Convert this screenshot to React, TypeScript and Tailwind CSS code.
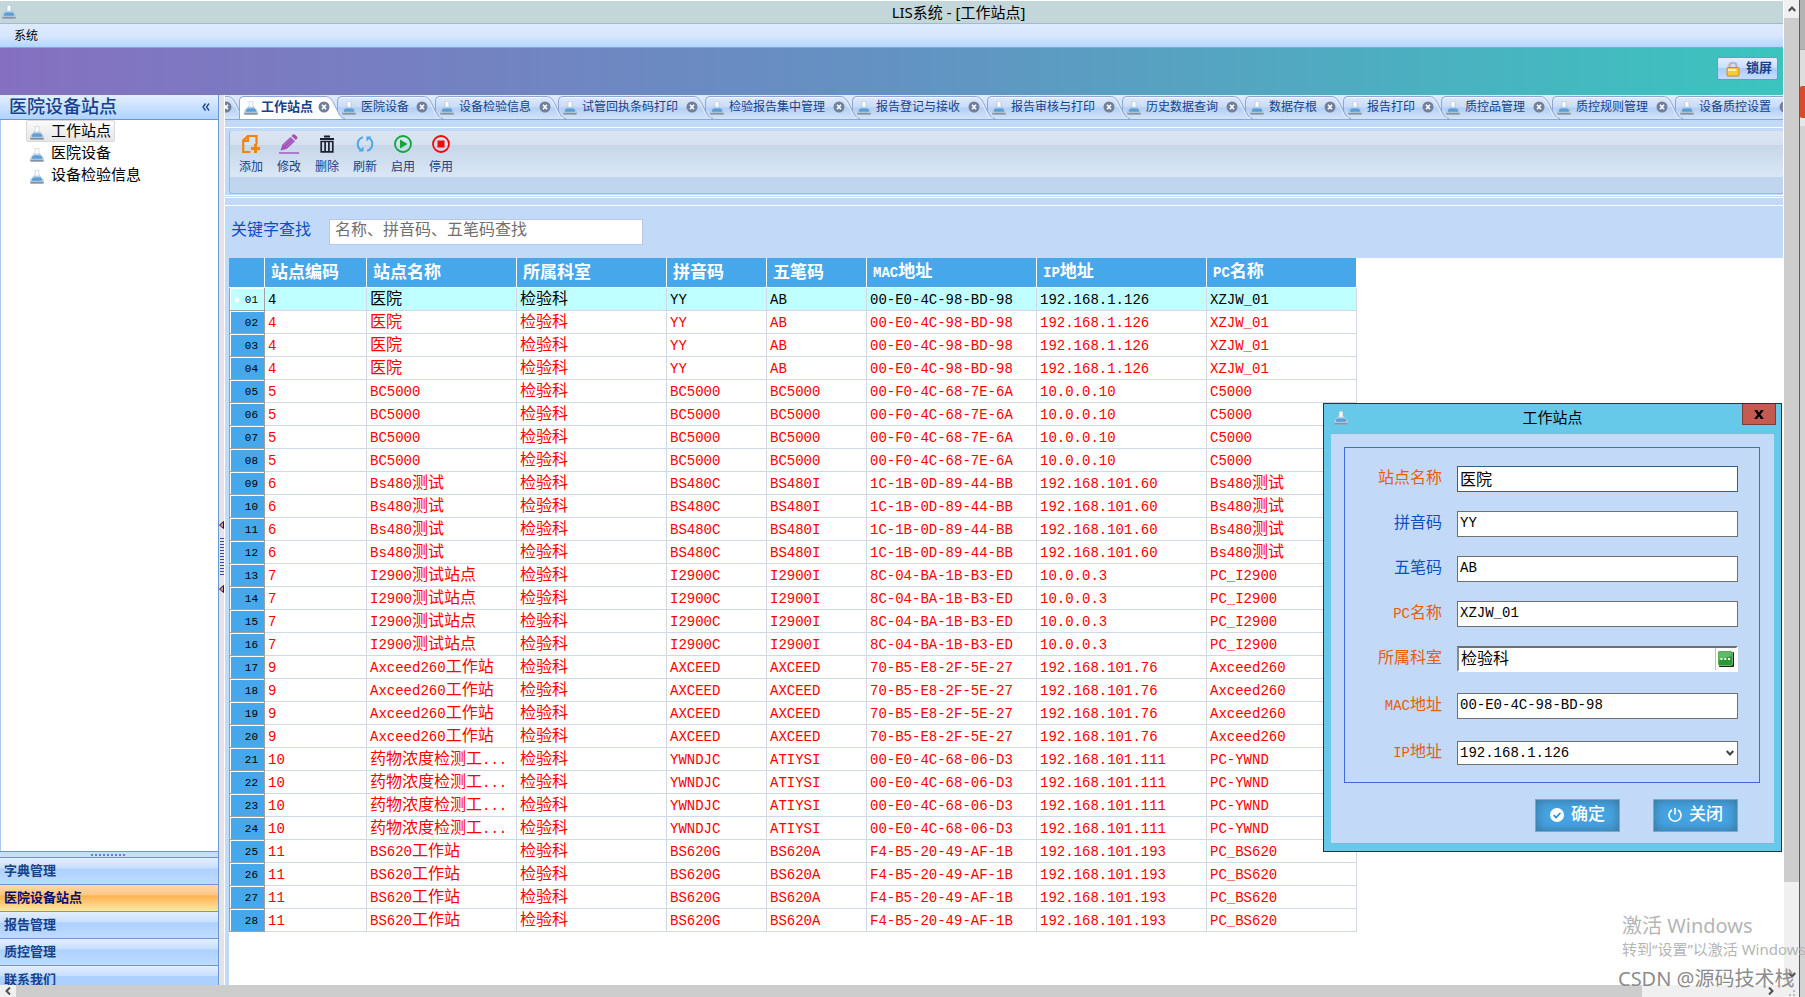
import React from "react";

const CJK = "font-['Liberation_Sans','Noto_Sans_CJK_SC',sans-serif]";

const tabs = [
  { name: "工作站点", width: "w-[98px]" },
  { name: "医院设备", width: "w-[98px]" },
  { name: "设备检验信息", width: "w-[123px]" },
  { name: "试管回执条码打印", width: "w-[147px]" },
  { name: "检验报告集中管理", width: "w-[147px]" },
  { name: "报告登记与接收", width: "w-[135px]" },
  { name: "报告审核与打印", width: "w-[135px]" },
  { name: "历史数据查询", width: "w-[123px]" },
  { name: "数据存根", width: "w-[98px]" },
  { name: "报告打印", width: "w-[98px]" },
  { name: "质控品管理", width: "w-[111px]" },
  { name: "质控规则管理", width: "w-[123px]" },
  { name: "设备质控设置", width: "w-[123px]" },
];

const columns = [
  { name: "站点编码", width: "w-[102px]" },
  { name: "站点名称", width: "w-[150px]" },
  { name: "所属科室", width: "w-[150px]" },
  { name: "拼音码", width: "w-[100px]" },
  { name: "五笔码", width: "w-[100px]" },
  { name: "MAC地址", width: "w-[170px]" },
  { name: "IP地址", width: "w-[170px]" },
  { name: "PC名称", width: "w-[150px]" },
];

const stations = [
  ["4", "医院", "检验科", "YY", "AB", "00-E0-4C-98-BD-98", "192.168.1.126", "XZJW_01"],
  ["5", "BC5000", "检验科", "BC5000", "BC5000", "00-F0-4C-68-7E-6A", "10.0.0.10", "C5000"],
  ["6", "Bs480测试", "检验科", "BS480C", "BS480I", "1C-1B-0D-89-44-BB", "192.168.101.60", "Bs480测试"],
  ["7", "I2900测试站点", "检验科", "I2900C", "I2900I", "8C-04-BA-1B-B3-ED", "10.0.0.3", "PC_I2900"],
  ["9", "Axceed260工作站", "检验科", "AXCEED", "AXCEED", "70-B5-E8-2F-5E-27", "192.168.101.76", "Axceed260"],
  ["10", "药物浓度检测工...", "检验科", "YWNDJC", "ATIYSI", "00-E0-4C-68-06-D3", "192.168.101.111", "PC-YWND"],
  ["11", "BS620工作站", "检验科", "BS620G", "BS620A", "F4-B5-20-49-AF-1B", "192.168.101.193", "PC_BS620"],
];
const rows = stations.flatMap((s) => [s, s, s, s]);

function Mixed({ text }: { text: string }) {
  return (
    <>
      {text.split(/([\x20-\x7e]+)/).map((part, i) =>
        i % 2 ? (
          <span key={i} className="font-['Liberation_Mono',monospace] text-[14px]">
            {part}
          </span>
        ) : (
          part
        )
      )}
    </>
  );
}

function Flask({ className = "" }: { className?: string }) {
  return (
    <svg viewBox="0 0 14 14" className={"h-[14px] w-[14px] shrink-0 " + className}>
      <defs>
        <linearGradient id="liquid" x1="0" y1="0" x2="0" y2="1">
          <stop offset="0" stopColor="#a9d3f2" />
          <stop offset="0.5" stopColor="#4f97d3" />
          <stop offset="1" stopColor="#7cb0dc" />
        </linearGradient>
      </defs>
      <path d="M5.200.400h3.600v4.200l4.200 4.900c.7.900.8 2.700.7 3.900H.3c-.1-1.200 0-3 .7-3.900l4.200-4.900z" fill="#d5dfe8" stroke="#a3b2c0" strokeWidth=".5" />
      <path d="M4.300 6.300h5.400l2.500 3c.5.800 0 1.700-1 1.900H2.800c-1-.2-1.500-1.100-1-1.900z" fill="url(#liquid)" />
      <path d="M.5 11.400c1 .6 12 .6 13 0v2.100H.5z" fill="#7f93a6" />
      <path d="M5.500.700h3v4.800h-3z" fill="#fff" />
    </svg>
  );
}

function CloseDot() {
  return (
    <svg viewBox="0 0 12 12" className="h-3 w-3">
      <circle cx="6" cy="6" r="5.500" fill="#6f7f9c" />
      <path d="M4 3.800l4 4.400M8 3.800l-4 4.400" stroke="#fff" strokeWidth="1.700" />
    </svg>
  );
}

function TabCap({ active }: { active: boolean }) {
  return (
    <svg viewBox="0 0 24 24" className="absolute -right-2 top-0 h-6 w-6">
      <defs>
        <linearGradient id="cap" x1="0" y1="0" x2="0" y2="1">
          <stop offset="0" stopColor="#dde8fb" />
          <stop offset=".45" stopColor="#c8dbf7" />
          <stop offset=".5" stopColor="#b4cff5" />
          <stop offset="1" stopColor="#d3e3f9" />
        </linearGradient>
      </defs>
      <path d="M0 .5H4C9 .5 11 4 13 8L18 18C20 21 21 22.500 24 22.500V23H0z" fill={active ? "#fff" : "url(#cap)"} />
      <path d="M0 .5H4C9 .5 11 4 13 8L18 18C20 21 21 22.500 24 22.500" fill="none" stroke="#8ea6d3" />
      {!active && <path d="M0 1.500H4C8 1.500 10 5 12 9L17 19C19 21.500 20 22 22 22.500" fill="none" stroke="#f3f8ff" strokeWidth=".8" />}
    </svg>
  );
}

function Tab({ name, width, active, order }: { name: string; width: string; active: boolean; order: number }) {
  return (
    <div className={"relative flex h-6 shrink-0 " + width} style={{ zIndex: order }}>
      <div
        className={
          "mr-4 min-w-0 flex-1 rounded-tl-[5px] border-l border-t border-[#8ea6d3] " +
          (active
            ? "bg-white"
            : "mb-px bg-[linear-gradient(#f3f8ff_0,#f3f8ff_1px,#dde8fb_1px,#c8dbf7_45%,#b4cff5_50%,#d3e3f9_100%)]")
        }
      />
      <TabCap active={active} />
      <div className="absolute inset-0 flex items-center pb-[3px] pl-[5px]">
        <Flask className="mt-[2px]" />
        <button
          className={
            "flex-1 whitespace-nowrap text-left text-[#15428b] " +
            (active ? "pl-[3px] text-[13px] font-bold" : "pl-[5px] text-[12px]")
          }
        >
          {name}
        </button>
        <button aria-label={"关闭" + name} className="mr-[7px] mt-px">
          <CloseDot />
        </button>
      </div>
    </div>
  );
}

const tools = [
  {
    name: "添加",
    icon: (
      <svg viewBox="0 0 20 20" className="h-5 w-5">
        <path d="M9.500 18H2.200V6.500L6.700 2H15.500V10M6.900 2.500V6.900H2.500" fill="none" stroke="#f08312" strokeWidth="2.200" />
        <path d="M14.500 10v9M10 14.500h9" stroke="#f08312" strokeWidth="3" />
      </svg>
    ),
  },
  {
    name: "修改",
    icon: (
      <svg viewBox="0 0 20 20" className="h-5 w-5">
        <path d="M1.500 16.500l2-6L11.500 3l4.500 4.200-8.300 7.700z" fill="#a351bd" />
        <path d="M12.500 2l1.200-1.200c.8-.8 1.700-.6 2.500.1l1.700 1.600c.8.8.7 1.700.1 2.300l-1.200 1.300z" fill="#a351bd" />
        <path d="M5 11l8-7.200M7 13l8-7.200" stroke="#c48ad6" strokeWidth=".7" />
        <path d="M0 19h20" stroke="#a351bd" strokeWidth="1.400" />
      </svg>
    ),
  },
  {
    name: "删除",
    icon: (
      <svg viewBox="0 0 20 20" className="h-5 w-5">
        <path d="M3 5h14M7 2.500h6" stroke="#1c2030" strokeWidth="2" />
        <path d="M4.200 7.500h11.600v10.300H4.200zM8.100 7.500v10M11.900 7.500v10" fill="none" stroke="#1c2030" strokeWidth="1.700" />
      </svg>
    ),
  },
  {
    name: "刷新",
    icon: (
      <svg viewBox="0 0 20 20" className="h-5 w-5">
        <path d="M8 3.100A7.200 7.200 0 0 0 5.500 15.700M12 16.900A7.200 7.200 0 0 0 14.500 4.300" fill="none" stroke="#4da6e8" strokeWidth="2" />
        <path d="M3.500 17.500h5v-5zM16.500 2.500h-5v5z" fill="#4da6e8" />
      </svg>
    ),
  },
  {
    name: "启用",
    icon: (
      <svg viewBox="0 0 20 20" className="h-5 w-5">
        <circle cx="10" cy="10" r="8" fill="none" stroke="#09a83a" strokeWidth="1.800" />
        <path d="M7 5.500l7.500 4.500L7 14.500z" fill="#09a83a" />
      </svg>
    ),
  },
  {
    name: "停用",
    icon: (
      <svg viewBox="0 0 20 20" className="h-5 w-5">
        <circle cx="10" cy="10" r="8" fill="none" stroke="#fa0505" strokeWidth="1.800" />
        <rect x="6.500" y="6.500" width="7" height="7" fill="#fa0505" />
      </svg>
    ),
  },
];

function Sidebar() {
  const nav = ["字典管理", "医院设备站点", "报告管理", "质控管理"];
  return (
    <aside className="flex w-[219px] shrink-0 flex-col border-r border-[#6c97d4] bg-white">
      <div className="flex h-[25px] shrink-0 items-center justify-between border-b border-[#6c97d4] bg-linear-to-b from-[#e3efff] to-[#afd2ff] pl-[9px] pr-2 text-[#15428b]">
        <h2 className="text-[18px] leading-6 font-medium">医院设备站点</h2>
        <button aria-label="折叠">
          <svg viewBox="0 0 8 8" className="h-2 w-2" fill="none" stroke="#15428b" strokeWidth="1.300">
            <path d="M3.500.5L1 4l2.500 3.500M7 .5L4.500 4 7 7.500" />
          </svg>
        </button>
      </div>
      <ul className="flex-1 border-l border-[#a9c6ec] text-[15px] leading-5 text-black">
        {["工作站点", "医院设备", "设备检验信息"].map((t, i) => (
          <li key={t} className="flex pl-[25px]">
            <button
              className={
                "flex h-[22px] items-center gap-[7px] whitespace-nowrap rounded-[2px] border px-[3px] pb-px " +
                (i === 0 ? "border-[#d9d9d9] bg-linear-to-b from-[#fafafa] to-[#e6e6e6]" : "border-transparent")
              }
            >
              <Flask className="mt-1" />
              <span>{t}</span>
            </button>
          </li>
        ))}
      </ul>
      <div className="flex h-[7px] shrink-0 items-center justify-center border-y border-[#6c97d4] bg-[#c6ddfb]">
        <div className="h-[2px] w-9 bg-[repeating-linear-gradient(90deg,#5b87c7_0,#5b87c7_2px,transparent_2px,transparent_4px)]" />
      </div>
      {nav.map((t, i) => (
        <button
          key={t}
          className={
            "h-[27px] shrink-0 border-b border-[#6c97d4] pl-1 text-left text-[13px] font-bold " +
            (i === 1
              ? "bg-[linear-gradient(#ffd9aa_0,#ffc785_38%,#ffb154_42%,#fdea9e_100%)] text-[#06106c]"
              : "bg-[linear-gradient(#e1eeff_0,#c9dffd_38%,#add1ff_42%,#c0dbff_100%)] text-[#15428b]")
          }
        >
          {t}
        </button>
      ))}
      <button className="h-[19px] shrink-0 overflow-hidden bg-[linear-gradient(#e1eeff_0,#c9dffd_50%,#add1ff_55%)] pl-1 text-left text-[13px] leading-[27px] font-bold text-[#15428b]">
        联系我们
      </button>
    </aside>
  );
}

function Splitter() {
  const arrow = (
    <svg viewBox="0 0 5 8" className="h-2 w-[5px]">
      <path d="M4.500.5v7L.5 4z" fill="#e08b6d" stroke="#0b1a78" />
    </svg>
  );
  return (
    <div className="flex w-[5px] shrink-0 flex-col items-center bg-[#e3e3e3] pt-[426px]">
      {arrow}
      <div className="my-2 h-10 w-1 bg-[radial-gradient(#3a4aa0_40%,transparent_45%)] bg-[length:2px_3px]" />
      {arrow}
    </div>
  );
}

function StationTable() {
  return (
    <table className="w-[1128px] table-fixed border-separate border-spacing-0 text-[16px]">
      <thead>
        <tr className="h-[30px]">
          <th className="w-9 border-b border-r border-white bg-[#46a8ea]" aria-label="序号" />
          {columns.map((c) => (
            <th
              key={c.name}
              className={"border-b border-r border-white bg-[#46a8ea] p-0 pl-[6px] text-left text-[17px] leading-6 font-bold text-white " + c.width}
            >
              <Mixed text={c.name} />
            </th>
          ))}
        </tr>
      </thead>
      <tbody>
        {rows.map((r, i) => (
          <tr key={i} className={"h-[23px] " + (i === 0 ? "bg-[#c0ffff] text-black" : "bg-white text-[#ff0000]")}>
            <th
              className={
                "border-b border-l border-r border-[#a0a0a0] p-0 text-right font-['Liberation_Mono',monospace] text-[11px] leading-5 font-normal text-black " +
                (i === 0 ? "bg-[#c0ffff]" : "bg-[#46a8ea]")
              }
            >
              <div className="flex h-[22px] items-center justify-end border-l border-t border-white pr-[6px]">
                {i === 0 && (
                  <svg viewBox="0 0 5 8" className="mr-[5px] h-2 w-[5px]">
                    <path d="M0 0l5 4-5 4z" fill="#fff" />
                  </svg>
                )}
                {String(i + 1).padStart(2, "0")}
              </div>
            </th>
            {r.map((v, j) => (
              <td key={j} className="overflow-hidden whitespace-nowrap border-b border-r border-[#d0d7e5] p-0 pl-[3px] leading-[18px]">
                <Mixed text={v} />
              </td>
            ))}
          </tr>
        ))}
      </tbody>
    </table>
  );
}

function Field({ id, label, required, children }: { id: string; label: string; required?: boolean; children: React.ReactNode }) {
  return (
    <div className="flex h-[26px] items-center">
      <label
        htmlFor={id}
        className={"w-[97px] shrink-0 whitespace-nowrap pb-[2px] text-right text-[16px] leading-6 " + (required ? "text-[#e95d06]" : "text-[#0a50c4]")}
      >
        <Mixed text={label} />
      </label>
      <div className="ml-[15px] mr-[21px] flex min-w-0 flex-1">{children}</div>
    </div>
  );
}

const box = "h-[26px] w-full border bg-white pl-[2px] pb-[3px] text-black outline-none ";
const mono = "border-[#707070] font-['Liberation_Mono',monospace] text-[14px]";
const actionButton =
  "flex h-[33px] w-[85px] items-center justify-center gap-[7px] border border-[#6cafc6] bg-[#46a4e3] pb-px text-[17px] font-medium text-white shadow-[inset_0_0_12px_#396f95]";

function StationDialog() {
  return (
    <section
      role="dialog"
      aria-label="工作站点"
      className="absolute right-[23px] top-[403px] z-50 w-[459px] border border-[#26343c] bg-[#66c9e9] px-[7px] pb-[7px]"
    >
      <header className="relative flex h-[29px] items-center justify-center">
        <Flask className="absolute left-[3px] top-[7px]" />
        <h3 className="text-[15px] text-black">工作站点</h3>
        <button
          aria-label="关闭"
          className="absolute -right-[2px] top-0 flex h-[21px] w-[34px] items-center justify-center border border-t-0 border-[#7d3c38] bg-[#c45a50]"
        >
          <svg viewBox="0 0 10 9" className="h-[9px] w-[10px]">
            <path d="M2 .7l6 7.600M8 .7l-6 7.600" stroke="#000" strokeWidth="2.200" />
            <path d="M.5.7h3M6.500.7h3M.5 8.300h3M6.500 8.300h3" stroke="#000" />
          </svg>
        </button>
      </header>
      <div className="border-y border-[#86b6cf] bg-[#c3d9f8] pb-[11px] pl-[13px] pr-[14px] pt-[13px]">
        <div className="border border-[#3f6be0] pb-4 pt-[18px]">
          <div className="flex flex-col gap-[19px]">
            <Field id="name" label="站点名称" required>
              <input id="name" defaultValue="医院" className={box + "border-[#2b6595] text-[16px] " + CJK} />
            </Field>
            <Field id="pinyin" label="拼音码">
              <input id="pinyin" defaultValue="YY" className={box + mono} />
            </Field>
            <Field id="wubi" label="五笔码">
              <input id="wubi" defaultValue="AB" className={box + mono} />
            </Field>
            <Field id="pc" label="PC名称" required>
              <input id="pc" defaultValue="XZJW_01" className={box + mono} />
            </Field>
            <Field id="dept" label="所属科室" required>
              <div className="flex h-[26px] w-full border-2 border-b-white border-l-[#8a8a8a] border-r-white border-t-[#707070] bg-white">
                <input id="dept" defaultValue="检验科" className={"min-w-0 flex-1 border-r border-[#a9c6e8] pl-[2px] pb-px text-[16px] outline-none " + CJK} />
                <button aria-label="选择科室" className="flex w-5 items-center justify-center">
                  <svg viewBox="0 0 16 16" className="h-4 w-4">
                    <rect x="1" y="1" width="15" height="15" rx="1" fill="#102d10" />
                    <rect x="0" y="0" width="14.500" height="14.500" rx="1.500" fill="#2b9a32" stroke="#d9ecd9" strokeWidth=".5" />
                    <path d="M1 1h12.500v4L1 9z" fill="#62b866" />
                    <path d="M2.500 7h2v2h-2zM6.300 7h2v2h-2zM10 7h2v2h-2z" fill="#fff" />
                  </svg>
                </button>
              </div>
            </Field>
          </div>
          <div className="mt-[21px] flex flex-col gap-[21px]">
            <Field id="mac" label="MAC地址" required>
              <input id="mac" defaultValue="00-E0-4C-98-BD-98" className={box + mono} />
            </Field>
            <Field id="ip" label="IP地址" required>
              <div className="relative flex w-full">
                <select id="ip" className="h-6 w-full appearance-none border border-[#707070] bg-white pl-[2px] font-['Liberation_Mono',monospace] text-[14px] text-black">
                  <option>192.168.1.126</option>
                </select>
                <svg viewBox="0 0 8 8" className="pointer-events-none absolute right-1 top-2 h-2 w-2" fill="none" stroke="#404040" strokeWidth="2">
                  <path d="M.7 2L4 5.500 7.300 2" />
                </svg>
              </div>
            </Field>
          </div>
        </div>
        <div className="mt-4 flex justify-end gap-[33px] pr-[22px]">
          <button className={actionButton}>
            <svg viewBox="0 0 14 14" className="h-[14px] w-[14px]">
              <circle cx="7" cy="7" r="7" fill="#fff" />
              <path d="M3.700 7.200l2.400 2.300 4.300-4.500" fill="none" stroke="#2f8bd0" strokeWidth="1.800" />
            </svg>
            确定
          </button>
          <button className={actionButton}>
            <svg viewBox="0 0 14 14" className="h-[14px] w-[14px]" fill="none" stroke="#fff" strokeWidth="1.600">
              <path d="M4 2A6 6 0 1 0 10 2M7 0v6.500" />
            </svg>
            关闭
          </button>
        </div>
      </div>
    </section>
  );
}

function Workspace() {
  return (
    <main className="flex min-w-0 flex-1 flex-col border-l border-white bg-[#c3d9f8]">
      <div className="flex h-[25px] shrink-0 overflow-hidden border-b border-[#8ea6d3] bg-linear-to-b from-[#e0ebfd] to-[#c3d9f8] pt-px">
        <div className="relative flex w-[14px] shrink-0">
          <TabCap active={false} />
          <div className="absolute -left-[5px] top-[5px]">
            <CloseDot />
          </div>
        </div>
        {tabs.map((t, i) => (
          <Tab key={t.name} {...t} active={i === 0} order={tabs.length - i} />
        ))}
      </div>
      <div className="mt-[7px] border-y border-white pb-px pl-1 pt-[3px]">
        <div className="h-[63px] rounded-l-[3px] border-b border-l border-[#9fbbdc] bg-[linear-gradient(#dbe5f1_0,#d5e1ef_22%,#c7d7e9_23%,#d9e7f5_74%,#bfd6ee_75%)] pl-[2px] pt-[3px]">
          <div className="flex">
            {tools.map((t) => (
              <button key={t.name} className="flex w-[38px] flex-col items-center gap-1 text-[12px] leading-[18px] text-[#15428b]">
                {t.icon}
                <span>{t.name}</span>
              </button>
            ))}
          </div>
        </div>
      </div>
      <div className="mt-px h-2 shrink-0 border-t border-white" />
      <div className="flex min-h-0 flex-1 flex-col border-t border-white">
        <div className="flex h-[52px] shrink-0 items-start pl-[6px] pt-[13px]">
          <label htmlFor="keyword" className="w-[98px] text-[16px] leading-[22px] text-[#0a50c4]">
            关键字查找
          </label>
          <input
            id="keyword"
            placeholder="名称、拼音码、五笔码查找"
            className="h-[26px] w-[314px] border border-[#b3c9e6] bg-white pb-1 pl-[5px] text-[16px] outline-none placeholder:text-[#707070]"
          />
        </div>
        <div className="ml-1 flex-1 overflow-hidden bg-white">
          <StationTable />
        </div>
      </div>
    </main>
  );
}

export default function App() {
  return (
    <div className={"relative flex h-screen w-full overflow-hidden bg-white " + CJK}>
      <div className="flex min-w-0 flex-1 flex-col">
        <div className="flex min-h-0 flex-1">
          <div className="flex min-w-0 flex-1 flex-col">
            <header className="relative mt-px flex h-[23px] shrink-0 items-center justify-center border-b border-[#a7b9c6] bg-[#c3d6da]">
              <Flask className="absolute left-[2px] top-1" />
              <h1 className="pl-[134px] font-['Noto_Sans','Noto_Sans_CJK_SC',sans-serif] text-[15px] leading-5 text-black">
                LIS系统 - [工作站点]
              </h1>
            </header>
            <nav className="flex h-6 shrink-0 items-center border-b border-[#7fa8d8] bg-linear-to-b from-[#deeaff] via-[#d8e7fe] to-[#b2d6ff] pl-[14px]">
              <button className="text-[12px] text-black">系统</button>
            </nav>
            <div className="flex h-[47px] shrink-0 items-start justify-end bg-[linear-gradient(90deg,#8570c0,#6392c2_50%,#3bc4be)] pr-[5px] pt-[9px]">
              <button className="flex h-[23px] w-[61px] items-center gap-[6px] rounded-[2px] border border-[#7f8fc9] bg-[linear-gradient(#e3eeff_0,#cbdffd_45%,#abcdff_50%,#c3dcff_100%)] pb-[2px] pl-2 text-[13px] font-bold text-[#15428b]">
                <svg viewBox="0 0 14 16" className="mt-[2px] h-4 w-[14px] shrink-0">
                  <path d="M3.500 8V4.500C3.500 1 10.500 1 10.500 4.500V8" fill="none" stroke="#b8b8b8" strokeWidth="2.200" />
                  <rect x="1" y="6.500" width="12" height="8.500" rx=".8" fill="#f7c93c" stroke="#c98a1a" />
                  <path d="M2 8h8v2H2z" fill="#fdf0b0" />
                </svg>
                <span className="whitespace-nowrap">锁屏</span>
              </button>
            </div>
            <div className="flex min-h-0 flex-1">
              <Sidebar />
              <Splitter />
              <Workspace />
            </div>
          </div>
          <div className="ml-px flex w-[15px] shrink-0 flex-col bg-[#f0f0f0]">
            <div className="flex h-[18px] items-center justify-center">
              <svg viewBox="0 0 8 8" className="h-2 w-2" fill="none" stroke="#505050" strokeWidth="2.200">
                <path d="M.7 6L4 2.500 7.300 6" />
              </svg>
            </div>
            <div className="h-[864px] bg-[#cdcdcd]" />
            <div className="flex flex-1 items-end justify-center pb-[6px]">
              <svg viewBox="0 0 8 8" className="h-2 w-2" fill="none" stroke="#505050" strokeWidth="2.200">
                <path d="M.7 2L4 5.500 7.300 2" />
              </svg>
            </div>
          </div>
        </div>
        <div className="flex h-3 shrink-0 items-center bg-[#f0f0f0]">
          <div className="flex w-4 justify-center">
            <svg viewBox="0 0 8 8" className="h-2 w-2" fill="none" stroke="#505050" strokeWidth="2">
              <path d="M6 .5L2.500 4 6 7.500" />
            </svg>
          </div>
          <div className="h-3 flex-1 bg-[#cdcdcd]" />
          <div className="flex w-[157px] items-center justify-end gap-[14px]">
            <svg viewBox="0 0 8 8" className="h-2 w-2" fill="none" stroke="#505050" strokeWidth="2">
              <path d="M2 .5L5.500 4 2 7.500" />
            </svg>
            <svg viewBox="0 0 6 6" className="mr-1 mt-1 h-[6px] w-[6px]" fill="#bcbcbc">
              <path d="M4 0h2v2H4zM4 4h2v2H4zM0 4h2v2H0z" />
            </svg>
          </div>
        </div>
      </div>
      <div className="flex w-[6px] shrink-0 flex-col border-l border-[#5a5a5a] bg-[#d3d3d3]">
        <div className="h-[50px] border-b border-[#a5a5a5] bg-[#b4b4b4]" />
        <div className="h-9 bg-[#dedede]" />
        <div className="h-8 rounded-l-[2px] bg-[#da4b2c]" />
        <div className="h-2 bg-[#e6e6e6]" />
      </div>
      <StationDialog />
      <div className="pointer-events-none absolute left-[1622px] top-[913px] z-40 whitespace-nowrap font-['Noto_Sans','Noto_Sans_CJK_SC',sans-serif] text-[#b5b5b5]">
        <p className="text-[20px] leading-[26px]">激活 Windows</p>
        <p className="text-[15px] leading-[20px]">转到“设置”以激活 Windows</p>
        <p className="-ml-1 mt-2 text-[20px] leading-[24px] text-[#8c8c8c]">CSDN @源码技术栈</p>
      </div>
    </div>
  );
}
